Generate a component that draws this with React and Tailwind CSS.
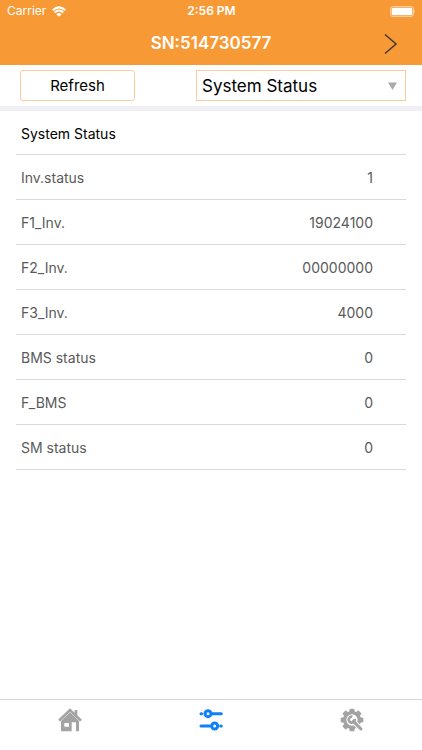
import React from "react";

const rows = [
  ["Inv.status", "1"],
  ["F1_Inv.", "19024100"],
  ["F2_Inv.", "00000000"],
  ["F3_Inv.", "4000"],
  ["BMS status", "0"],
  ["F_BMS", "0"],
  ["SM status", "0"],
];

function WifiIcon() {
  return (
    <svg viewBox="0 0 42 32" className="h-[11px] w-[14px]" fill="#fff" aria-hidden="true">
      <path d="M21 32 L13 24 Q21 17 29 24 Z" />
      <path d="M8 19 Q21 7 34 19" fill="none" stroke="#fff" strokeWidth="6" />
      <path d="M2 12 Q21 -5 40 12" fill="none" stroke="#fff" strokeWidth="6" />
    </svg>
  );
}

function BatteryIcon() {
  return (
    <svg viewBox="0 0 78 33" className="h-[11px] w-[26px]" aria-hidden="true">
      <rect x="1.5" y="1.5" width="69" height="30" rx="7" fill="none" stroke="#fff" strokeOpacity="0.5" strokeWidth="3" />
      <rect x="5" y="5" width="62" height="23" rx="4" fill="#fff" />
      <path d="M73 11 Q78 16 73 22 Z" fill="#fff" fillOpacity="0.5" />
    </svg>
  );
}

function HomeIcon() {
  return (
    <svg viewBox="0 0 72 72" className="size-6" aria-hidden="true">
      <path d="M50 6 H58 V26 H50 Z" fill="#a3a3a3" />
      <path d="M3 38 L36 6 L69 38" fill="none" stroke="#a3a3a3" strokeWidth="8" />
      <path
        d="M36 13 L63 39 V70 H54 V43 H41 V70 H9 V39 Z M19 45 V56 H33 V45 Z"
        fill="#a3a3a3"
        fillRule="evenodd"
      />
    </svg>
  );
}

function SlidersIcon() {
  return (
    <svg viewBox="0 0 72 72" className="size-6" fill="none" stroke="#1080f5" strokeLinecap="round" aria-hidden="true">
      <path d="M6 17 H8 M40 17 H67 M6 54 H32 M65 54 H67" strokeWidth="9" />
      <circle cx="27" cy="17" r="9" strokeWidth="9" />
      <circle cx="47" cy="54" r="9" strokeWidth="9" />
    </svg>
  );
}

const teeth = [0, 45, 90, 135, 180, 225, 270, 315];

function GearIcon() {
  return (
    <svg viewBox="0 0 72 72" className="size-6" aria-hidden="true">
      <g fill="#a3a3a3">
        {teeth.map((a) => (
          <path key={a} d="M27 14 L29 4 Q29 2 31 2 H41 Q43 2 43 4 L45 14 Z" transform={`rotate(${a} 36 36)`} />
        ))}
      </g>
      <circle cx="36" cy="36" r="22" fill="#fff" stroke="#a3a3a3" strokeWidth="10" />
      <path d="M40 40 L65 65" stroke="#fff" strokeWidth="15" strokeLinecap="round" />
      <path d="M40 40 L63 63" stroke="#a3a3a3" strokeWidth="9" strokeLinecap="round" />
      <path d="M37 26 A9 9 0 1 0 44 33" fill="none" stroke="#a3a3a3" strokeWidth="8" />
    </svg>
  );
}

export default function App() {
  return (
    <div className="flex min-h-screen flex-col bg-white font-['Inter','Liberation_Sans',sans-serif] text-black">
      <header className="bg-[#f79a35] text-white">
        <div className="grid h-[22px] grid-cols-3 items-center pr-1.5 pl-[7px] text-xs">
          <span className="flex items-center gap-1.5">
            Carrier <WifiIcon />
          </span>
          <span className="text-center font-semibold">2:56 PM</span>
          <span className="flex justify-end">
            <BatteryIcon />
          </span>
        </div>
        <div className="grid h-[43px] grid-cols-[1fr_auto_1fr] items-center px-6">
          <h1 className="col-start-2 text-[17px] font-semibold">SN:514730577</h1>
          <button type="button" aria-label="Next" className="justify-self-end">
            <svg viewBox="0 0 14 22" className="h-[22px] w-[14px]" fill="none" stroke="#4a3a28" strokeWidth="1.6" aria-hidden="true">
              <path d="M1 1.5 L12 11 L1 20.5" />
            </svg>
          </button>
        </div>
      </header>

      <main>
        <div className="flex items-center justify-between border-b-[5px] border-[#efeff4] py-[5px] pr-4 pl-5">
          <button type="button" className="h-[31px] w-[115px] rounded-[3px] border border-[#fbcb9c] pt-0.5 text-[15px]">
            Refresh
          </button>
          <div className="grid w-[210px] items-center">
            <select
              aria-label="Section"
              className="col-start-1 row-start-1 h-[31px] w-full appearance-none border border-[#fbcb9c] bg-white pt-0.5 pl-[5px] text-[17px]"
            >
              <option>System Status</option>
            </select>
            <svg viewBox="0 0 9 8" className="pointer-events-none col-start-1 row-start-1 mr-[9px] h-2 w-[9px] justify-self-end" aria-hidden="true">
              <path d="M0 0.5 H9 L4.5 8 Z" fill="#aaa" />
            </svg>
          </div>
        </div>

        <div className="px-4">
          <table className="w-full border-collapse text-sm">
            <thead>
              <tr className="h-[43px] border-b border-[#d9d9d9]">
                <th colSpan={2} className="pt-[3px] pl-[5px] text-left font-normal">
                  System Status
                </th>
              </tr>
            </thead>
            <tbody className="text-[#5a5a5a]">
              {rows.map(([name, value]) => (
                <tr key={name} className="h-[45px] border-b border-[#d9d9d9]">
                  <th scope="row" className="pt-[3px] pl-[5px] text-left font-normal">
                    {name}
                  </th>
                  <td className="pt-[3px] pr-[33px] text-right">{value}</td>
                </tr>
              ))}
            </tbody>
          </table>
        </div>
      </main>

      <nav className="mt-auto grid h-[51px] grid-cols-3 border-t border-[#d4d4d4] pb-2.5">
        <button type="button" aria-label="Home" className="grid place-items-center">
          <HomeIcon />
        </button>
        <button type="button" aria-label="Status" aria-current="page" className="grid place-items-center">
          <SlidersIcon />
        </button>
        <button type="button" aria-label="Settings" className="grid place-items-center">
          <GearIcon />
        </button>
      </nav>
    </div>
  );
}
